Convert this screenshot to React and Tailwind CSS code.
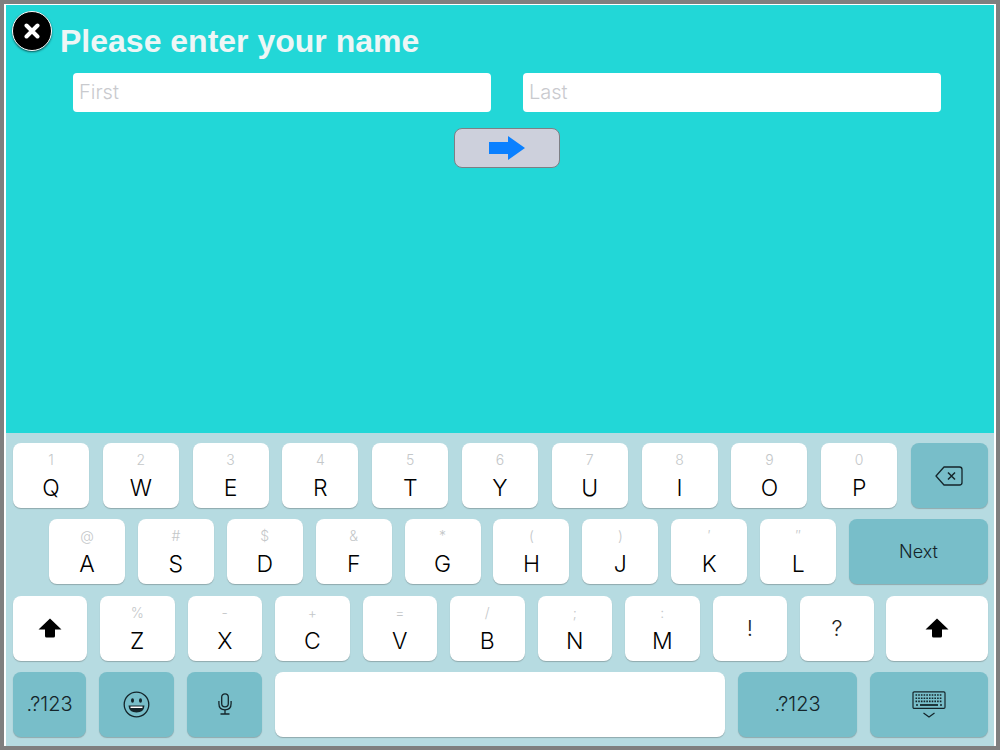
import React from 'react';

const keyFont = { fontFamily: 'Inter, "Liberation Sans", sans-serif' };

// ancho de cada tecla blanca / azul sale de la clase que se le pasa
const Key = ({ hint, label, className = 'w-[76px]' }) => (
  <div className={`flex h-[65px] shrink-0 flex-col items-center rounded-lg bg-white shadow-[0_1px_1px_#8fa9ad] ${className}`}>
    <span className="mt-[9px] h-[16px] text-[14px] leading-[16px] font-light text-[#c4c7c9]">{hint}</span>
    <span className="mt-[6px] text-[23px] leading-[28px] font-[350] text-black">{label}</span>
  </div>
);

const IconKey = ({ children, className, dark }) => (
  <div className={`flex h-[65px] shrink-0 items-center justify-center rounded-lg shadow-[0_1px_1px_#8fa9ad] ${dark ? 'bg-[#78bec9]' : 'bg-white'} ${className}`}>
    {children}
  </div>
);

const ShiftIcon = () => (
  <svg width="24" height="20" viewBox="0 0 24 20" className="mt-[-1px]">
    <path d="M12 0.5 L23.5 11.5 H17 V18 Q17 19.5 15.5 19.5 H8.5 Q7 19.5 7 18 V11.5 H0.5 Z" fill="#000" />
  </svg>
);

const BackspaceIcon = () => (
  <svg width="28" height="20" viewBox="0 0 28 20" fill="none" stroke="#14252a" strokeWidth="1.3">
    <path d="M9 1 H24.5 Q27 1 27 3.5 V16.5 Q27 19 24.5 19 H9 L1 10 Z" strokeLinejoin="round" />
    <path d="M13 6.5 L20 13.5 M20 6.5 L13 13.5" strokeWidth="1.5" />
  </svg>
);

const SmileIcon = () => (
  <svg width="27" height="27" viewBox="0 0 27 27" fill="none" stroke="#14252a" strokeWidth="1.3">
    <circle cx="13.5" cy="13.5" r="12.3" />
    <ellipse cx="9.5" cy="9.5" rx="1.5" ry="2.2" fill="#14252a" stroke="none" />
    <ellipse cx="17.5" cy="9.5" rx="1.5" ry="2.2" fill="#14252a" stroke="none" />
    <path d="M5.5 14.5 H21.5 Q21 21.5 13.5 21.5 Q6 21.5 5.5 14.5 Z" fill="#14252a" stroke="none" />
    <path d="M7.5 15.5 H19.5 V17 H7.5 Z" fill="#fff" stroke="none" />
  </svg>
);

const MicIcon = () => (
  <svg width="14" height="22" viewBox="0 0 14 22" fill="none" stroke="#14252a" strokeWidth="1.3">
    <rect x="3.7" y="0.8" width="6.6" height="13" rx="3.3" />
    <path d="M0.9 8 V10.5 Q0.9 16.8 7 16.8 Q13.1 16.8 13.1 10.5 V8" />
    <path d="M7 16.8 V20.8 M2.5 21 H11.5" />
  </svg>
);

const KeyboardIcon = () => (
  <svg width="34" height="27" viewBox="0 0 34 27" fill="none" stroke="#14252a" className="mt-[1px]">
    <rect x="1" y="0.8" width="32" height="16.6" rx="1.2" strokeWidth="1.2" />
    <path d="M3.5 4 H30.5 M3.5 7.2 H30.5 M3.5 10.4 H30.5" strokeWidth="1.6" strokeDasharray="1.6 1.1" />
    <path d="M8 14 H26" strokeWidth="1.8" />
    <path d="M4 14 H6 M28 14 H30" strokeWidth="1.6" />
    <path d="M11.5 22 L17 26 L22.5 22" strokeWidth="1.2" />
  </svg>
);

const App = () => {
  return (
    <div className="h-[750px] w-[1000px] border-[4px] border-[#7f7f7f] bg-white">
      <div className="flex h-full w-full flex-col border-x-2 border-t-[1px] border-white" style={keyFont}>
        {/* ZONA SUPERIOR */}
        <main className="flex h-[428px] shrink-0 flex-col bg-[#22d7d7]">
          <div className="flex items-start pt-[6px] pl-[6px]">
            <div className="flex h-[40px] w-[40px] items-center justify-center rounded-full border-[1.5px] border-white bg-black shadow-[0_1px_2px_#0b5d5d]">
              <svg width="16" height="16" viewBox="0 0 16 16">
                <path d="M2.5 2.5 L13.5 13.5 M13.5 2.5 L2.5 13.5" stroke="#fff" strokeWidth="4" strokeLinecap="round" />
              </svg>
            </div>
            <h1 className="mt-[12px] ml-[8px] font-['Liberation_Sans',sans-serif] text-[32px] leading-[36px] font-bold text-[#eef6f6]">
              Please enter your name
            </h1>
          </div>

          <div className="mt-[14px] flex gap-[32px] pl-[67px]">
            <div className="flex h-[39px] w-[418px] items-center rounded-[4px] bg-white pb-[2px] pl-[6px] text-[20px] font-light text-[#c9cace]">First</div>
            <div className="flex h-[39px] w-[418px] items-center rounded-[4px] bg-white pb-[2px] pl-[6px] text-[20px] font-light text-[#c9cace]">Last</div>
          </div>

          <button className="mt-[16px] ml-[448px] flex h-[40px] w-[106px] items-center justify-center rounded-lg border border-[#7d7f85] bg-[#cdd0dc]">
            <svg width="36" height="24" viewBox="0 0 36 24">
              <path d="M0 6 H19 V0 L36 12 L19 24 V18 H0 Z" fill="#0a80ff" />
            </svg>
          </button>
        </main>

        {/* TECLADO */}
        <section className="flex flex-1 flex-col gap-[11.33px] bg-[#b6dbe1] pt-[10px] pl-[7px]">
          <div className="flex gap-[13.8px]">
            <Key hint="1" label="Q" />
            <Key hint="2" label="W" />
            <Key hint="3" label="E" />
            <Key hint="4" label="R" />
            <Key hint="5" label="T" />
            <Key hint="6" label="Y" />
            <Key hint="7" label="U" />
            <Key hint="8" label="I" />
            <Key hint="9" label="O" />
            <Key hint="0" label="P" />
            <IconKey dark className="w-[77px]"><BackspaceIcon /></IconKey>
          </div>

          <div className="flex gap-[12.9px] pl-[36px]">
            <Key hint="@" label="A" />
            <Key hint="#" label="S" />
            <Key hint="$" label="D" />
            <Key hint="&" label="F" />
            <Key hint="*" label="G" />
            <Key hint="(" label="H" />
            <Key hint=")" label="J" />
            <Key hint="′" label="K" />
            <Key hint="″" label="L" />
            <IconKey dark className="w-[139px]"><span className="text-[18px] font-[350] text-[#14252a]">Next</span></IconKey>
          </div>

          <div className="flex gap-[13px]">
            <IconKey className="w-[74px]"><ShiftIcon /></IconKey>
            <Key hint="%" label="Z" className="w-[74.5px]" />
            <Key hint="-" label="X" className="w-[74.5px]" />
            <Key hint="+" label="C" className="w-[74.5px]" />
            <Key hint="=" label="V" className="w-[74.5px]" />
            <Key hint="/" label="B" className="w-[74.5px]" />
            <Key hint=";" label="N" className="w-[74.5px]" />
            <Key hint=":" label="M" className="w-[74.5px]" />
            <IconKey className="w-[74.5px]"><span className="text-[22px] font-[350] text-[#222]">!</span></IconKey>
            <IconKey className="w-[74px]"><span className="text-[22px] font-[350] text-[#222]">?</span></IconKey>
            <IconKey className="ml-[-1px] w-[102px]"><ShiftIcon /></IconKey>
          </div>

          <div className="flex gap-[13px]">
            <IconKey dark className="w-[73px]"><span className="text-[20px] font-[350] text-[#14252a]">.?123</span></IconKey>
            <IconKey dark className="w-[75px]"><SmileIcon /></IconKey>
            <IconKey dark className="w-[75px]"><MicIcon /></IconKey>
            <IconKey className="w-[450px]" />
            <IconKey dark className="w-[119px]"><span className="text-[20px] font-[350] text-[#14252a]">.?123</span></IconKey>
            <IconKey dark className="w-[118px]"><KeyboardIcon /></IconKey>
          </div>
        </section>
      </div>
    </div>
  );
};

export default App;
